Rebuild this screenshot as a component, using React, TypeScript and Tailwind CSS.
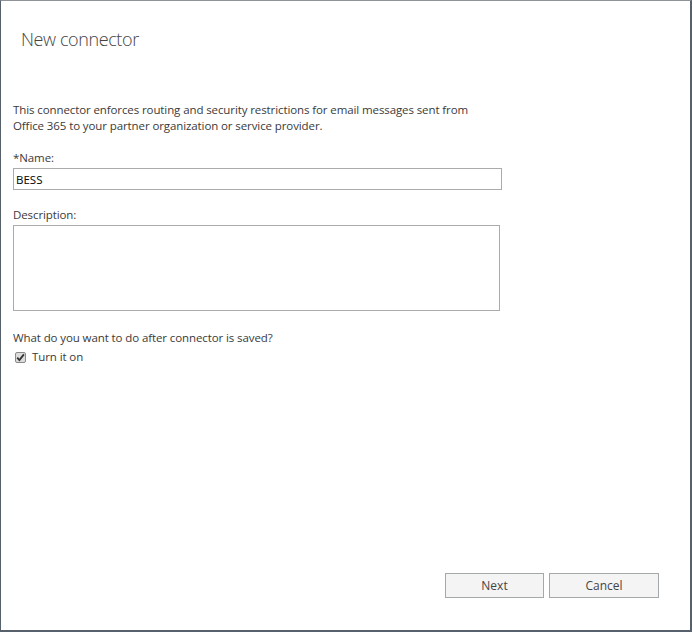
import React, { useState } from "react";

const font = { fontFamily: '"Open Sans", "Noto Sans", Arial, sans-serif' };

const App: React.FC = () => {
  const [name, setName] = useState<string>("BESS");
  const [description, setDescription] = useState<string>("");
  const [turnOn, setTurnOn] = useState<boolean>(true);

  return (
    <div
      className="w-[692px] h-[632px] bg-white border-l border-t border-r-2 border-b-2 border-l-[#56616c] border-t-[#8f9296] border-r-[#56616c] border-b-[#56616c] text-[#3a3a3a] flex flex-col"
      style={font}
    >
      <h1 className="font-light text-[18px] leading-6 text-[#444444] pl-5 pt-[26px] tracking-[-0.4px]">
        New connector
      </h1>

      <div className="pl-3 pt-[51px] flex flex-col text-[11.5px] leading-4">
        <p className="tracking-[-0.1px]">
          This connector enforces routing and security restrictions for email messages sent from
          <br />
          Office 365 to your partner organization or service provider.
        </p>

        <label className="mt-4 tracking-[-0.1px]">*Name:</label>
        <input
          value={name}
          onChange={(e) => setName(e.target.value)}
          className="mt-[2px] w-[489px] h-[22px] border border-[#ababab] px-[2px] text-[11.5px] text-black outline-none"
          style={font}
        />

        <label className="mt-[17px] tracking-[-0.1px]">Description:</label>
        <textarea
          value={description}
          onChange={(e) => setDescription(e.target.value)}
          className="mt-[2px] w-[487px] h-[86px] border border-[#ababab] resize-none outline-none"
        />

        <p className="mt-[19px] tracking-[-0.1px]">What do you want to do after connector is saved?</p>
        <label className="mt-[3px] flex items-center gap-[6px] cursor-default" onClick={() => setTurnOn(!turnOn)}>
          <span className="ml-[2px] w-[11px] h-[11px] rounded-[2px] border border-[#8a8a8a] bg-[#dcdcdc] flex items-center justify-center">
            {turnOn && (
              <svg width="9" height="9" viewBox="0 0 9 9">
                <path d="M1.2 4.6 L3.4 7 L7.9 1.4" fill="none" stroke="#333" strokeWidth="1.8" />
              </svg>
            )}
          </span>
          <span className="tracking-[-0.1px]">Turn it on</span>
        </label>
      </div>

      <div className="mt-auto flex justify-end gap-[5px] pr-[31px] pb-[32px]">
        <button className="w-[99px] h-[25px] bg-[#f4f4f4] border border-[#a3a8ab] text-[12px] text-[#444]" style={font}>
          Next
        </button>
        <button className="w-[110px] h-[25px] bg-[#f4f4f4] border border-[#a3a8ab] text-[12px] text-[#444]" style={font}>
          Cancel
        </button>
      </div>
    </div>
  );
};

export default App;
